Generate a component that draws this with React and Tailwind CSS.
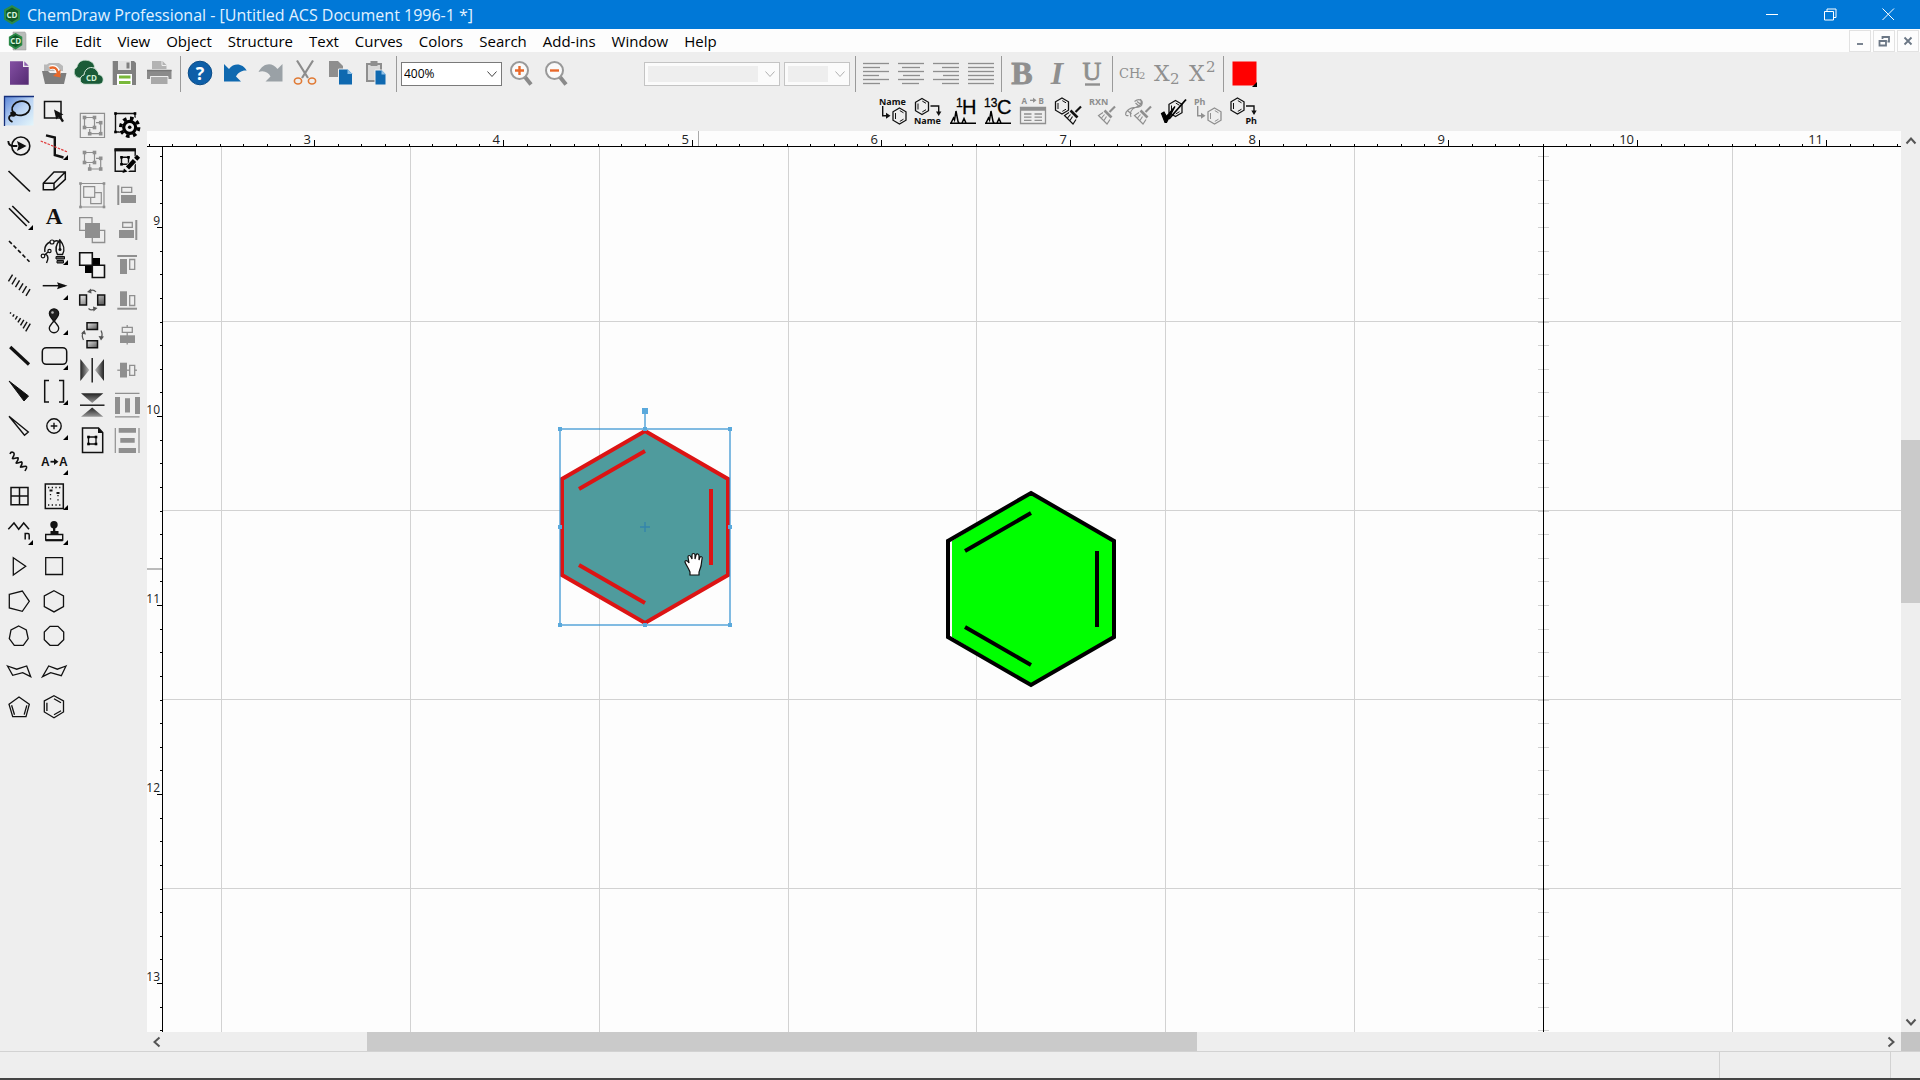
import React, { useState } from 'react';

const G = '#8f8f8f';

const menus = ['File', 'Edit', 'View', 'Object', 'Structure', 'Text', 'Curves', 'Colors', 'Search', 'Add-ins', 'Window', 'Help'];

// Small pieces shared by several icons
const Corner = () => <path d="M31 26v5h-5z" fill="#000" stroke="none" />;

const Ring = ({ x, y, color = '#111' }) => (
  <g transform={`translate(${x} ${y})`} fill="none" stroke={color} strokeWidth="1.3">
    <path d="M0-8 6.5-4.2V4.2L0 8-6.5 4.2V-4.2z" />
    <path d="M-4-3V3M.3-5.4 4-3.2M.3 5.4 4 3.2" strokeWidth="1" />
  </g>
);

const Broom = ({ x = 0, color = '#111' }) => (
  <g transform={`translate(${x} 0)`} fill="none" stroke={color}>
    <path d="M31 12.5 25.5 18" strokeWidth="2.2" />
    <path d="M20.5 16.5 27.5 23.5" strokeWidth="2.6" />
    <path d="M19 18.5 14.5 21.5 23 30 26 25.5" strokeWidth="1.2" />
    <path d="M20.5 20.5 17.5 24M22.5 22.5 20 26.5" strokeWidth="1.1" />
  </g>
);

const Label = ({ x, y, size = 9, color = '#111', children }) => (
  <text x={x} y={y} fontSize={size} fontWeight="700" fill={color} stroke="none" fontFamily="'Noto Sans', sans-serif">
    {children}
  </text>
);

const Nodes = ({ points, color = G, size = 3.6 }) =>
  points.map(([x, y]) => (
    <rect key={`${x}-${y}`} x={x - size / 2} y={y - size / 2} width={size} height={size} fill={color} stroke="none" />
  ));

const Slashes = ({ count, from, to }) =>
  Array.from({ length: count }, (_, i) => {
    const t = i / (count - 1);
    const cx = 8.5 + 17.5 * t;
    const cy = 9 + 14.5 * t;
    const half = from + (to - from) * t;
    return <path key={i} d={`M${cx - half * 0.6} ${cy + half}L${cx + half * 0.6} ${cy - half}`} strokeWidth="1.4" />;
  });

const Logo = ({ page }) => (
  <svg viewBox="0 0 20 20" className="h-5 w-5 shrink-0" aria-hidden="true">
    {page && <path d="M6 1h12l1 2v16H6z" fill="#b9bcb9" stroke="#999" strokeWidth=".5" />}
    <g transform={page ? 'translate(1 2) scale(.84)' : ''}>
      <path d="M9 0 17 4.5v10L9 19.5 1 14.5v-10z" fill="#2b8a48" />
      <path d="M9 2.5 15 6v7.5L9 17l-6-3.5V6z" fill="#0f5a28" />
    </g>
    <text x={page ? 8.7 : 9} y="12.8" textAnchor="middle" fontSize="8" fontWeight="700" fill="#d8f2dc" fontFamily="'Open Sans', sans-serif">CD</text>
  </svg>
);

const tools = [
  ['Lasso', (
    <>
      <ellipse cx="19" cy="14.3" rx="9" ry="7" transform="rotate(-12 19 14.3)" strokeWidth="1.8" />
      <path d="M8.5 18.5 13.5 21M12 18.5c1 4-5 1-5 5.5 0 2 1.5 3 3.5 4" strokeWidth="1.7" />
      <circle cx="11.2" cy="20" r="2" fill="#111" />
    </>
  )],
  ['Marquee', (
    <>
      <path d="M7.5 7.5H24V24H7.5z" strokeWidth="1.5" />
      <path d="M17 15.5 26.5 20.5 23.5 21.5 27 27 25 28.3 21.7 23 19.3 25.5z" fill="#111" stroke="none" />
    </>
  )],
  ['Structure perspective', (
    <>
      <circle cx="18.8" cy="17" r="9" strokeWidth="1.6" />
      <path d="M6.3 12c.2 4 2 5 5 5h4" strokeWidth="1.9" />
      <path d="M15 12 24.5 17 15 22 16.5 17z" fill="#111" stroke="none" />
    </>
  )],
  ['Mass fragmentation', (
    <>
      <path d="M9 6.3 17.8 8.5V26L26.5 28.5" strokeWidth="2.4" />
      <path d="M3.7 12 30.5 23" stroke="#e03a3a" strokeWidth="1.2" strokeDasharray="2.5 1.2" />
      <Corner />
    </>
  )],
  ['Solid bond', <path d="M6.5 7 28 27.5" strokeWidth="1.7" />],
  ['Eraser', <path d="M6.3 19.3 17 8H28.3V15.3L17 25.7H6.3zM6.3 19.3H17L28.3 8M17 19.3V25.7" strokeWidth="1.5" />],
  ['Multiple bonds', (
    <>
      <path d="M7 9.3 24.7 27M10.3 7 27.3 23.7" strokeWidth="1.6" />
      <Corner />
    </>
  )],
  ['Text', <text x="17" y="25" textAnchor="middle" fontSize="23" fontWeight="700" fill="#111" stroke="none" fontFamily="'Liberation Serif', serif">A</text>],
  ['Dashed bond', <path d="M7 7 27.5 27.7" strokeWidth="1.6" strokeDasharray="4 2.4" />],
  ['Pen', (
    <>
      <path d="M22.8 6C18.5 11 17.5 15 20.5 20.5H25.5C28.5 15 27 11 22.8 6zM22.9 6.5V15" strokeWidth="1.5" />
      <circle cx="23" cy="15.5" r="1.5" fill="#111" stroke="none" />
      <path d="M19 22.5H27.5V25H19zM20 26.5H26.5V29H20z" fill="#555" strokeWidth="1" />
      <path d="M13 8C9 10 7 13 8 18M17 7.5C20 6 21 6.5 22 8M7.5 21 11 18M8.5 20C12 22 11.5 25 9.5 29" strokeWidth="1.4" />
      <circle cx="15" cy="8" r="2" strokeWidth="1.2" />
      <circle cx="6" cy="22" r="1.8" strokeWidth="1.2" />
      <circle cx="12.5" cy="17" r="1.6" strokeWidth="1.2" />
      <Corner />
    </>
  )],
  ['Hashed bond', <Slashes count={6} from={3.4} to={3.4} />],
  ['Arrow', (
    <>
      <path d="M5.7 16.7H28" strokeWidth="1.5" />
      <path d="M20 13.2 30.5 16.7 20 20.2 21.5 16.7z" fill="#111" stroke="none" />
      <Corner />
    </>
  )],
  ['Hashed wedged bond', <Slashes count={7} from={0.6} to={3.8} />],
  ['Orbital', (
    <>
      <path d="M17 18C15 14 12.3 12.5 12.3 9.5A4.7 4.7 0 0 1 21.7 9.5C21.7 12.5 19 14 17 18z" fill="#222" strokeWidth="1.2" />
      <path d="M17 16.5C15 20 12.3 21.5 12.3 24A4.7 4.7 0 0 0 21.7 24C21.7 21.5 19 20 17 16.5z" strokeWidth="1.4" />
      <circle cx="15.5" cy="8.5" r="1.3" fill="#bbb" stroke="none" />
      <Corner />
    </>
  )],
  ['Bold bond', <path d="M8.2 8 27 25.5" strokeWidth="3.2" />],
  ['Rounded rectangle', (
    <>
      <rect x="5.3" y="8.7" width="24.4" height="16.6" rx="4" strokeWidth="1.5" />
      <Corner />
    </>
  )],
  ['Wedged bond', <path d="M7 7 26.5 22 22 27z" fill="#111" strokeWidth="1" />],
  ['Brackets', (
    <>
      <path d="M12 6.5H7.7V28H12M22 6.5H26.5V28H22" strokeWidth="1.5" />
      <Corner />
    </>
  )],
  ['Hollow wedged bond', <path d="M7 7.3 26.3 23 22.5 26.3z" strokeWidth="1.4" />],
  ['Chemical symbol', (
    <>
      <circle cx="17" cy="17" r="7.2" strokeWidth="1.4" />
      <path d="M13.7 17H20.3M17 13.7V20.3" strokeWidth="1.4" />
      <Corner />
    </>
  )],
  ['Wavy bond', <path d="M8 10C9 7 13 8 12 11S9 15 12 14.5 17 12.5 16 15.5 12.5 19.5 15.5 19 20.5 16.5 20 19.5 17 23.5 19.5 23 25 21 24.5 24L23 27" strokeWidth="1.6" />],
  ['Atom mapping', (
    <>
      <text x="4" y="22" fontSize="12" fontWeight="700" fill="#111" stroke="none" fontFamily="'Liberation Sans', sans-serif">A</text>
      <text x="22" y="22" fontSize="12" fontWeight="700" fill="#111" stroke="none" fontFamily="'Liberation Sans', sans-serif">A</text>
      <path d="M13.5 17.7H18" strokeWidth="1.8" />
      <path d="M17 14.5 21.5 17.7 17 21z" fill="#111" stroke="none" />
      <Corner />
    </>
  )],
  ['Table', <path d="M9 8.5H26V25.7H9zM17.5 8.5V25.7M9 17H26" strokeWidth="1.5" />],
  ['Well plate', (
    <>
      <path d="M8.3 5H26.3V29.5H8.3z" strokeWidth="1.5" />
      <path d="M11 8.5H24M11 26H24" strokeWidth="1.3" strokeDasharray="1.3 2.4" />
      <path d="M13.5 15V23M21 16V23" strokeWidth="1.3" strokeDasharray="1.3 3" />
      <path d="M12.5 11.5H15.5M19.5 14H22.5" strokeWidth="2" />
      <Corner />
    </>
  )],
  ['Acyclic chain', (
    <>
      <path d="M6.3 15.3 12 9 16.7 15.3 21.7 9 27 15.3" strokeWidth="1.5" />
      <path d="M23.2 25.5V19.5H26Q27.2 19.5 27.2 21V25.5" strokeWidth="1.5" />
      <Corner />
    </>
  )],
  ['Template stamp', (
    <>
      <circle cx="17" cy="10.7" r="3.7" fill="#111" stroke="none" />
      <path d="M16 13H18.3V17H21.5V20H13.5V17H16z" fill="#111" stroke="none" />
      <path d="M8.7 20.5H25.7V26H8.7z" strokeWidth="1.4" />
      <path d="M8.7 26.3H25.7" strokeWidth="2" />
      <Corner />
    </>
  )],
  ['Cyclopropane ring', <path d="M11.3 8.7 23.7 17.3 11.3 26z" strokeWidth="1.3" />],
  ['Cyclobutane ring', <path d="M8.7 8.7H25.5V25.5H8.7z" strokeWidth="1.3" />],
  ['Cyclopentane ring', <path d="M7.3 10.3 20.3 7 27.3 17.3 20.3 27.3 7.3 24z" strokeWidth="1.3" />],
  ['Cyclohexane ring', <path d="M17 6.7 26.5 11.9V22.5L17 27.9 7.3 22.5V11.9z" strokeWidth="1.3" />],
  ['Cycloheptane ring', <path d="M16.7 7 24.3 11 26.2 19.7 21.3 26.3H12.3L7.3 19.7 9 11z" strokeWidth="1.3" />],
  ['Cyclooctane ring', <path d="M13 7.3H21L26.7 13V20.7L21 26.3H13L7.3 20.7V13z" strokeWidth="1.3" />],
  ['Chair ring left', <path d="M5.5 12 14.7 15.2 24.7 12 28.7 22.7 20.7 18.7 10.7 21.3z" strokeWidth="1.3" />],
  ['Chair ring right', <path d="M29 12 20.3 15.2 11.7 12 5.5 22.7 13.7 18.7 24.3 21.7z" strokeWidth="1.3" />],
  ['Cyclopentadiene ring', <path d="M17 8 27.3 15.3 24 27.7H10.7L7 15.3zM9.6 16.3 12.5 25.7M24.8 16.3 22.2 25.7" strokeWidth="1.3" />],
  ['Benzene ring', <path d="M17 6.7 26.5 12V23L17 28.7 7.3 23V12zM9.9 13.7V22M17 9.7 24 13.7M17 25.7 24 21.7" strokeWidth="1.3" />],
];

const arranges = [
  ['Group', (
    <g stroke={G}>
      <path d="M5.3 5.3H29.5V29.5H5.3zM9.5 9.5H19.5V19.5H9.5zM21 14.7H25.7V25.7H14.7V21" strokeWidth="1.2" />
      <Nodes points={[[9.5, 9.5], [19.5, 9.5], [9.5, 19.5], [19.5, 19.5], [25.7, 14.7], [25.7, 25.7], [14.7, 25.7]]} />
    </g>
  )],
  ['Object settings', (
    <>
      <path d="M5.5 5.5H25V24H5.5z" strokeWidth="1.4" />
      <Nodes points={[[5.5, 5.5], [25, 5.5], [5.5, 24]]} color="#000" size={2.6} />
      <circle cx="19.7" cy="19.3" r="11" fill="#eee" stroke="none" />
      <circle cx="19.7" cy="19.3" r="9" stroke="#000" strokeWidth="3.4" strokeDasharray="3.6 3.47" />
      <circle cx="19.7" cy="19.3" r="6" fill="#eee" stroke="#000" strokeWidth="3.2" />
      <circle cx="19.7" cy="19.3" r="1.8" fill="#000" stroke="none" />
    </>
  )],
  ['Ungroup', (
    <g stroke={G}>
      <path d="M9.5 9.5H19.5V19.5H9.5zM21 15.3H25.7V26H14.7V21" strokeWidth="1.2" />
      <Nodes points={[[9.5, 9.5], [19.5, 9.5], [9.5, 19.5], [19.5, 19.5], [25.7, 15.3], [25.7, 26], [14.7, 26]]} />
    </g>
  )],
  ['Edit object', (
    <>
      <path d="M5.2 6H25.2V28.3H5.2z" strokeWidth="1.4" />
      <path d="M4.5 7H25.9" strokeWidth="2.8" />
      <path d="M11.5 14.3H18.5V21.3H11.5z" strokeWidth="1.4" />
      <Nodes points={[[11.5, 14.3], [18.5, 14.3], [11.5, 21.3]]} color="#000" size={2.6} />
      <path d="M14.5 28.5 27.5 14.5" stroke="#eee" strokeWidth="6" />
      <path d="M17.5 25 24.5 17.5M25.7 16.3 28.5 13.3" strokeWidth="4.4" stroke="#000" />
      <path d="M12.5 30 14 25.5 17.5 28.5z" fill="#000" stroke="none" />
    </>
  )],
  ['Join', (
    <g stroke={G}>
      <path d="M5.5 5.5H29V29H5.5zM8.7 8.7H19.7V19.3H8.7z" strokeWidth="1.2" />
      <path d="M20 14.7H26.3V25.7H15.7V19.7" strokeWidth="1.2" />
      <Nodes points={[[5.5, 5.5], [29, 5.5], [5.5, 29], [29, 29]]} size={2.6} />
    </g>
  )],
  ['Align left', (
    <g fill={G} stroke={G}>
      <path d="M8.3 7.3V27" strokeWidth="2" />
      <path d="M11.7 9.3H21.7V14.3H11.7z" fill="none" strokeWidth="1.3" />
      <path d="M11 17H26V25H11z" stroke="none" />
    </g>
  )],
  ['Bring to front', (
    <g stroke={G}>
      <path d="M4.7 4.7H17V17.3H4.7zM17.3 17.3H29.7V29.5H17.3z" strokeWidth="1.3" />
      <path d="M10 10H25V25H10z" fill={G} stroke="none" />
    </g>
  )],
  ['Align right', (
    <g fill={G} stroke={G}>
      <path d="M26.3 7V27" strokeWidth="2" />
      <path d="M12.7 9.5H22.3V14.3H12.7z" fill="none" strokeWidth="1.3" />
      <path d="M9 17H24V25H9z" stroke="none" />
    </g>
  )],
  ['Send to back', (
    <>
      <path d="M10 10H25V25H10z" fill="#000" stroke="none" />
      <path d="M4.7 4.7H17.3V17.3H4.7zM17.3 17.3H29.5V29.5H17.3z" fill="#f4f4f4" strokeWidth="1.6" />
    </>
  )],
  ['Align top', (
    <g fill={G} stroke={G}>
      <path d="M7.3 8H27" strokeWidth="2" />
      <path d="M10 11H17V26H10z" stroke="none" />
      <path d="M19.7 11.5H24.7V21.3H19.7z" fill="none" strokeWidth="1.3" />
    </g>
  )],
  ['Rotate horizontal', (
    <>
      <path d="M4.7 12H11.5V22H4.7zM22.7 12H29.7V22H22.7z" fill="url(#swatch)" strokeWidth="1.5" />
      <path d="M14.5 8C17 6.5 19.5 7 21 9M20 25.5C17.5 27.5 15 27 13.5 25.5" stroke="#555" strokeWidth="1.2" />
      <path d="M12 9 16 5.5 16.5 10.5zM22.5 25 18.5 28.5 18 23.5z" fill="#555" stroke="none" />
    </>
  )],
  ['Align bottom', (
    <g fill={G} stroke={G}>
      <path d="M7.3 25.7H27" strokeWidth="2" />
      <path d="M10 8.3H17V23H10z" stroke="none" />
      <path d="M19.7 12.7H24.7V22.5H19.7z" fill="none" strokeWidth="1.3" />
    </g>
  )],
  ['Rotate vertical', (
    <>
      <path d="M12 4.7H22.5V11.5H12z" fill="url(#swatch)" strokeWidth="1.5" />
      <path d="M12 22.7H22.5V29.7H12z" fill="url(#swatch)" strokeWidth="1.5" />
      <path d="M8.5 22C7 19 7 16 8.5 14M26 12.5C27.5 15 27.5 17 26.5 20" stroke="#555" strokeWidth="1.2" />
      <path d="M9.5 12 11 16.5 6 15.5zM26 22.5 23.5 18 29 18.5z" fill="#555" stroke="none" />
    </>
  )],
  ['Center vertical axis', (
    <g fill={G} stroke={G}>
      <path d="M17.2 7V26.5" strokeWidth="1.3" />
      <path d="M12.3 9.3H22.3V14.3H12.3z" fill="#eee" strokeWidth="1.3" />
      <path d="M10 17.3H25V25H10z" stroke="none" />
    </g>
  )],
  ['Flip horizontal', (
    <>
      <path d="M5.3 6 14.3 17 5.3 28z" fill="url(#shade)" stroke="none" />
      <path d="M29 6 20 17 29 28z" fill="url(#shadeBack)" stroke="none" />
      <path d="M17.2 5V29.5" strokeWidth="1.4" />
    </>
  )],
  ['Center horizontal axis', (
    <g fill={G} stroke={G}>
      <path d="M7.3 17.2H27" strokeWidth="1.3" />
      <path d="M10 9.7H17V24.5H10z" stroke="none" />
      <path d="M19.7 12.3H24.7V22.3H19.7z" fill="#eee" strokeWidth="1.3" />
    </g>
  )],
  ['Flip vertical', (
    <>
      <path d="M6 5.3H28.3L17.2 15z" fill="url(#shadeDown)" stroke="none" />
      <path d="M6 28.8H28.3L17.2 19.5z" fill="url(#shadeDown)" stroke="none" />
      <path d="M5 17.2H29.5" strokeWidth="1.4" />
    </>
  )],
  ['Distribute horizontally', (
    <g fill={G} stroke={G}>
      <path d="M5 5.3H29.5M5 28.8H29.5" strokeWidth="1.2" />
      <path d="M5 9H10V26H5zM15 10.3H20V24.5H15zM25 9H30V26H25z" stroke="none" />
    </g>
  )],
  ['Page setup', (
    <>
      <path d="M7.5 5H23.5L27.7 9.5V29.5H7.5z" strokeWidth="1.5" />
      <path d="M23 4.7V10H28z" fill="#111" stroke="none" />
      <path d="M13.5 14H21V21H13.5z" strokeWidth="1.3" />
      <Nodes points={[[13.5, 14], [21, 14], [13.5, 21], [21, 21]]} color="#000" size={2.6} />
    </>
  )],
  ['Distribute vertically', (
    <g fill={G} stroke={G}>
      <path d="M5.3 5V30M29 5V30" strokeWidth="1.2" />
      <path d="M8.7 5H26V9.7H8.7zM10.3 15H24.7V19.7H10.3zM8.7 25H26V30H8.7z" stroke="none" />
    </g>
  )],
];

const fileTools = [
  ['New', (
    <>
      <path d="M8 5.3H21V11H26.7V28.7H8z" fill="url(#purple)" stroke="none" />
      <path d="M22.3 5.3 26.7 9.7H22.3z" fill="#8d5fae" stroke="none" />
    </>
  )],
  ['Open', (
    <>
      <path d="M7 15V8.5H10L12 7H22L26 10V15z" fill="#b9b9b9" stroke="none" />
      <path d="M5 15H11L13 17H29.5L27 28H8z" fill="#7d7d7d" stroke="none" />
      <path d="M12.5 12C17 10 20.5 12 21.5 18" stroke="#fff" strokeWidth="4.5" />
      <path d="M12.5 12C17 10.5 20 12 21 17" stroke="#e8682a" strokeWidth="2.4" />
      <path d="M16 20 23.5 21.5V13.5z" fill="#e8682a" stroke="none" />
    </>
  )],
  ['Open from cloud', (
    <>
      <path d="M7 22A6 6 0 0 1 5 11C6 6 10 3.5 15 4.3 19 5 22 7 22.5 11L14 22z" fill="#1c5c38" stroke="#cfe3d5" strokeWidth=".8" />
      <path d="M13 28.3C7 28.3 6.5 20 12 19 12.5 12 20 9 24.5 14 26 15.5 26.5 17 26.5 18.5 32.5 19 33 28 27 28.3z" fill="#1a5b38" stroke="#dcebe0" strokeWidth="1" />
      <text x="19.5" y="24.5" textAnchor="middle" fontSize="8" fontWeight="700" fill="#cdeed4" stroke="none" fontFamily="'Open Sans', sans-serif">CD</text>
    </>
  )],
  ['Save', (
    <>
      <path d="M5.7 5H27L29 7V29H5.7z" fill="#808080" stroke="none" />
      <path d="M11 5H24V14H11z" fill="#e3e3e3" stroke="none" />
      <path d="M19.5 6.5H22.5V12.5H19.5z" fill="#808080" stroke="none" />
      <path d="M10 18H25V29H10z" fill="#fff" stroke="none" />
      <path d="M12 19.5H23.5V22.5H12zM12 25H23.5V28H12z" fill="#79b83a" stroke="none" />
    </>
  )],
  ['Print', (
    <>
      <path d="M10 13V5H20.5L24.5 9V13z" fill="#b3b3b3" stroke="none" />
      <path d="M20 5V9.5H24.5" stroke="#eee" strokeWidth="1" />
      <path d="M5 14H29.5V23H26V20H8.5V23H5z" fill="#8b8b8b" stroke="none" />
      <path d="M8.5 20.5H26V28.5H8.5z" fill="#a8a8a8" stroke="#eee" strokeWidth="1" />
      <path d="M5 14.5H29.5" stroke="#777" strokeWidth="1.5" />
    </>
  )],
];

const editTools = [
  ['Help', (
    <>
      <circle cx="17" cy="17" r="11.8" fill="#0e5fa8" stroke="#0a4c88" strokeWidth="1" />
      <text x="17" y="23.5" textAnchor="middle" fontSize="18" fontWeight="700" fill="#fff" stroke="none" fontFamily="'Open Sans', sans-serif">?</text>
    </>
  )],
  ['Undo', <path d="M6 8V25.5H23L18 20.5C20 16.5 24 14 28.7 14.5 25 7.5 16 6 11 13z" fill="#0f69b0" stroke="none" />],
  ['Redo', <path d="M29.5 8V25.5H12.5L17.5 20.5C15.5 16.5 11 14 5.5 16 10 7 19 5.5 24.5 13z" fill="#9aa1a6" stroke="none" />],
  ['Cut', (
    <>
      <path d="M9 4.5 20 22M25 4.5 14 22" stroke="#8c8c8c" strokeWidth="2.2" />
      <ellipse cx="10" cy="25" rx="3.6" ry="3" stroke="#e07a35" strokeWidth="1.6" />
      <ellipse cx="24" cy="25" rx="3.6" ry="3" stroke="#e07a35" strokeWidth="1.6" />
    </>
  )],
  ['Copy', (
    <>
      <path d="M6 5H15L20 10V21H6z" fill="#8e8e8e" stroke="none" />
      <path d="M15.5 13H25L29.5 17.5V29H15.5z" fill="#0f69b0" stroke="#eee" strokeWidth="1" />
      <path d="M24.5 13V18H29.5z" fill="#8fc0e6" stroke="none" />
    </>
  )],
  ['Paste', (
    <>
      <path d="M9 8H23V25H9z" stroke="#8e8e8e" strokeWidth="2" fill="#d9d9d9" />
      <path d="M12.5 5H19.5V10H12.5z" fill="#8e8e8e" stroke="none" />
      <path d="M17 14H23.5L28 18V29H17z" fill="#0f69b0" stroke="#eee" strokeWidth="1" />
      <path d="M23.5 14V18.5H28z" fill="#8fc0e6" stroke="none" />
    </>
  )],
];

const Lens = ({ plus }) => (
  <>
    <path d="M22 21 28 28.5" stroke="#8a8a8a" strokeWidth="4" />
    <circle cx="16.5" cy="14.5" r="8.5" fill="#fafafa" stroke="#999" strokeWidth="2" />
    <path d={plus ? 'M12 14.5H21M16.5 10V19' : 'M12 14.5H21'} stroke="#e8682a" strokeWidth="2.4" />
  </>
);

const zoomTools = [['Zoom in', <Lens plus />], ['Zoom out', <Lens />]];

const lineRows = (rows) => (
  <g stroke={G} strokeWidth="1.3">
    {rows.map(([x, w], i) => (
      <path key={i} d={`M${x} ${7.5 + i * 4}h${w}`} />
    ))}
  </g>
);

const alignTools = [
  ['Left', lineRows([[5, 26], [5, 17], [5, 26], [5, 16], [5, 26], [5, 17]])],
  ['Center', lineRows([[5, 26], [9, 18], [5, 26], [10, 17], [5, 26], [9, 17]])],
  ['Right', lineRows([[5, 26], [14, 17], [5, 26], [15, 16], [5, 26], [14, 17]])],
  ['Justify', lineRows([[5, 26], [5, 26], [5, 26], [5, 26], [5, 26], [5, 26]])],
];

const serif = (x, y, size, text, extra = {}) => (
  <text x={x} y={y} fontSize={size} fill={G} stroke="none" fontFamily="'DejaVu Serif', serif" {...extra}>{text}</text>
);

const styleTools = [
  ['Bold', serif(18, 28, 32, 'B', { fontWeight: 700, textAnchor: 'middle', fontFamily: "'Liberation Serif', serif", stroke: G, strokeWidth: 0.8 })],
  ['Italic', serif(18, 28, 32, 'I', { fontStyle: 'italic', fontWeight: 700, textAnchor: 'middle', fontFamily: "'Liberation Serif', serif" })],
  ['Underline', (
    <>
      {serif(18, 24, 26, 'U', { textAnchor: 'middle', fontFamily: "'Liberation Serif', serif", stroke: G, strokeWidth: 0.8 })}
      <path d="M11 28.5H26" stroke={G} strokeWidth="2.4" />
    </>
  )],
];

const scriptTools = [
  ['Formula', <>{serif(4, 22, 13, 'CH')}{serif(24, 23, 10, '2')}</>],
  ['Subscript', <>{serif(4, 25, 22, 'X')}{serif(20, 28, 15, '2')}</>],
  ['Superscript', <>{serif(4, 25, 22, 'X')}{serif(21, 16, 15, '2')}</>],
];

const spectrum = (
  <path d="M5 29.3H31M6 29 8.5 24 9.5 26 11 17 13 27.5 14 29M17 29 19 24.5 21 29" stroke="#000" strokeWidth="1.5" />
);

const thin = (x, y, size, text) => (
  <text x={x} y={y} fontSize={size} fill="#000" stroke="#000" strokeWidth=".3" fontFamily="'Liberation Sans', sans-serif">{text}</text>
);

const chemTools = [
  ['Name to structure', (
    <>
      <Label x={4} y={11}>Name</Label>
      <path d="M7.7 12V21.7H12" strokeWidth="1.4" />
      <path d="M11 18.7 15.5 21.7 11 24.7z" fill="#111" stroke="none" />
      <Ring x={24.5} y={22} />
    </>
  )],
  ['Structure to name', (
    <>
      <Ring x={12} y={12.5} />
      <path d="M20.5 12H28.7V18" strokeWidth="1.4" />
      <path d="M26 17.5 28.7 22 31.4 17.5z" fill="#111" stroke="none" />
      <Label x={4} y={30}>Name</Label>
    </>
  )],
  ['1H NMR', <>{spectrum}{thin(11, 13, 12, '1')}{thin(17, 20, 20, 'H')}</>],
  ['13C NMR', <>{spectrum}{thin(4, 13, 12, '13')}{thin(17, 20, 20, 'C')}</>],
  ['Analyze stoichiometry', (
    <>
      <Label x={6.5} y={9.5} size={8} color={G}>A</Label>
      <Label x={23.5} y={9.5} size={8} color={G}>B</Label>
      <path d="M15 6.3H19" stroke={G} strokeWidth="1.3" />
      <path d="M18 3.8 21.5 6.3 18 8.8z" fill={G} stroke="none" />
      <path d="M5.5 13.5H30.5V29.5H5.5z" stroke={G} strokeWidth="1.3" />
      <path d="M5.5 15H30.5" stroke={G} strokeWidth="3.5" />
      <path d="M9 20H16.5M19.5 20H27M9 23.2H16.5M19.5 23.2H27M9 26.4H16.5M19.5 26.4H27" stroke={G} strokeWidth="1.3" />
    </>
  )],
  ['Clean up structure', <><Ring x={12} y={12} /><Broom /></>],
  ['Clean up reaction', <><Label x={4} y={11} color={G}>RXN</Label><Broom x={-1} color={G} /></>],
  ['Clean up biopolymer', (
    <>
      <g stroke={G} strokeWidth="1.2">
        <path d="M20.5 5C23 11 19 12 15.5 13.5S9 17 11 23M14.5 7.5C19 4 24 6 21.5 11.5 19 15 13 11.5 8 16 4.5 19 5 22.5 8.5 21.5M17 7.5 21 10.5M15.5 9 19.5 12.5M8 17 11.5 20" />
      </g>
      <Broom color={G} />
    </>
  )],
  ['Check structure', (
    <>
      <Ring x={20.5} y={14.5} />
      <path d="M14 25 31 5.5" stroke="#000" strokeWidth="1.8" />
      <path d="M6.5 19.5 9 18 11.5 22.5 20 12.5 11.5 28.5H10z" fill="#000" stroke="#000" strokeWidth="1.2" />
    </>
  )],
  ['Expand label', (
    <>
      <Label x={4} y={10.5} color={G}>Ph</Label>
      <path d="M7.7 12V21.7H12" stroke={G} strokeWidth="1.4" />
      <path d="M11 18.7 15.5 21.7 11 24.7z" fill={G} stroke="none" />
      <Ring x={24.5} y={22} color={G} />
    </>
  )],
  ['Contract label', (
    <>
      <Ring x={12.5} y={12} />
      <path d="M21 12H29V17" strokeWidth="1.4" />
      <path d="M26.3 16.5 29 21 31.7 16.5z" fill="#111" stroke="none" />
      <Label x={20.5} y={30}>Ph</Label>
    </>
  )],
];

const ToolButton = ({ name, children, active, onClick }) => (
  <button
    type="button"
    aria-label={name}
    aria-pressed={active}
    onClick={onClick}
    className="h-[35px] w-[35px] shrink-0 p-0 hover:bg-white/60"
  >
    <svg viewBox="0 0 35 35" className="h-full w-full" fill="none" stroke="#111" strokeWidth="1.5" aria-hidden="true">
      {active && <rect x="2.5" y="2.5" width="29" height="29" fill="url(#pressed)" stroke="none" />}
      {active && <path d="M2.5 32V2.5H32" stroke="#16307c" strokeWidth="1.3" />}
      {children}
    </svg>
  </button>
);

const ToolSet = ({ items }) => items.map(([name, icon]) => <ToolButton key={name} name={name}>{icon}</ToolButton>);

const Separator = () => (
  <span className="flex h-9 w-1.5 shrink-0 justify-center">
    <span className="w-px bg-[#9a9a9a]" />
  </span>
);

const Chevron = ({ d, className }) => (
  <svg viewBox="0 0 12 12" className={`h-3 w-3 shrink-0 ${className}`} fill="none" stroke="currentColor" aria-hidden="true">
    <path d={d} />
  </svg>
);

const EmptySelect = ({ label, width }) => (
  <div className={`flex h-6 items-center border border-[#c4c4c4] bg-[#fbfbfb] p-[3px] ${width}`}>
    <select aria-label={label} disabled className="h-full min-w-0 flex-1 appearance-none bg-[#eee]" />
    <Chevron d="M1.5 3.5 6 8.5 10.5 3.5" className="ml-1.5 text-[#b0b0b0]" />
  </div>
);

// Ruler numbers are inches, each one divided in eighths
const INCH = 189;
const EIGHTHS = 8;

const TopRuler = () => (
  <svg className="block h-4 w-full shrink-0 bg-[#fdfdfd]" shapeRendering="crispEdges" aria-hidden="true">
    <rect x="0" y="15" width="100%" height="1" fill="#000" />
    {Array.from({ length: 76 }, (_, i) => {
      const x = Math.round(167 + ((i - 7) * INCH) / EIGHTHS);
      const major = (i - 7) % EIGHTHS === 0;
      return <rect key={i} x={x} y={major ? 9 : 13} width="1" height={major ? 6 : 2} fill="#000" />;
    })}
    {Array.from({ length: 9 }, (_, i) => (
      <text key={i} x={164 + i * INCH} y="13" textAnchor="end" fontSize="13" fill="#222" fontFamily="'Open Sans', sans-serif">{i + 3}</text>
    ))}
    <rect x="551" y="0" width="1" height="15" fill="#aaa" />
  </svg>
);

const SideRuler = () => (
  <svg className="block h-full w-4 shrink-0 bg-[#fdfdfd]" shapeRendering="crispEdges" aria-hidden="true">
    <rect x="15" y="0" width="1" height="100%" fill="#000" />
    {Array.from({ length: 41 }, (_, i) => {
      const y = Math.round(80 + ((i - 3) * INCH) / EIGHTHS);
      const major = (i - 3) % EIGHTHS === 0;
      return <rect key={i} x={major ? 10 : 13} y={y} width={major ? 5 : 2} height="1" fill="#000" />;
    })}
    {Array.from({ length: 5 }, (_, i) => (
      <text key={i} x="13" y={78 + i * INCH} textAnchor="end" fontSize="12" fill="#222" fontFamily="'Open Sans', sans-serif">{i + 9}</text>
    ))}
    <rect x="0" y="421" width="15" height="2" fill="#bbb" />
  </svg>
);

const Benzene = ({ x, y, fill, stroke, inset = 0 }) => (
  <g transform={`translate(${x} ${y})`}>
    <path d={`M0-96 83-48V48L0 96 ${-83 + inset} 48V-48z`} fill={fill} />
    <path d="M0-96 83-48V48L0 96-83 48V-48zM-66-38 0-76M66-38V38M-66 38 0 76" fill="none" stroke={stroke} strokeWidth="4" />
  </g>
);

const SelectionBox = ({ x, y }) => (
  <g transform={`translate(${x} ${y})`} stroke="#2f8fd0" strokeOpacity=".6" fill="none" strokeWidth="2">
    <rect x="-85" y="-98" width="170" height="196" />
    <path d="M0-98V-113" />
    <path d="M-5 0H5M0-5V5" stroke="#2277b5" strokeWidth="1.4" />
    <g fill="#5aa9dc" stroke="none">
      <rect x="-3" y="-119" width="6" height="6" />
      {[[-85, -98], [85, -98], [-85, 98], [85, 98], [0, -98], [0, 98], [-85, 0], [85, 0]].map(([a, b]) => (
        <rect key={`${a},${b}`} x={a - 2} y={b - 2} width="4" height="4" />
      ))}
    </g>
  </g>
);

const Canvas = () => (
  <svg className="block h-full min-w-0 flex-1 bg-[#fdfdfd]" role="img" aria-label="Drawing area">
    <g fill="#d2d2d2" shapeRendering="crispEdges">
      {Array.from({ length: 9 }, (_, i) => (
        <rect key={i} x={Math.round(58 + i * 188.85)} y="0" width="1" height="100%" />
      ))}
      {Array.from({ length: 4 }, (_, i) => (
        <rect key={i} x="0" y={174 + i * INCH} width="100%" height="1" />
      ))}
      {Array.from({ length: 38 }, (_, i) => (
        <rect key={i} x="1375" y={Math.round(80 + ((i - 3) * INCH) / EIGHTHS)} width="11" height="1" />
      ))}
      <rect x="1380" y="0" width="1" height="100%" fill="#000" />
    </g>
    <Benzene x={482} y={380} fill="#4f9b9d" stroke="#dc1414" />
    <SelectionBox x={482} y={380} />
    <Benzene x={868} y={442} fill="#00ff00" stroke="#000" inset={4} />
    {/* grab cursor */}
    <path
      d="M527 425C525 420 523 418 522 415 522 413 524 413 526 416L525 410C525 408 527 408 528 410L529 412V408C529 406 532 406 532 408V412L533 408C534 406 536 407 536 409V413L537 410C538 409 540 410 539 412L538 419 536 425V428H527z"
      fill="#fff"
      stroke="#111"
      strokeWidth="1.2"
    />
  </svg>
);

const windowControls = [
  ['Minimize', 'M0 6.5H12'],
  ['Restore', 'M.5 3.5H9.5V12H.5zM3 3.5V1H12V9.5H9.5'],
  ['Close', 'M.5 .5 12 12M12 .5 .5 12'],
];

const documentControls = [
  ['Minimize document', 'M3 9H9'],
  ['Restore document', 'M1.5 6H8V10.5H1.5zM4.5 4V2H11V6.5H9.5'],
  ['Close document', 'M2.5 2.5 9.5 9.5M9.5 2.5 2.5 9.5'],
];

const App = () => {
  const [tool, setTool] = useState('Lasso');
  const [zoom, setZoom] = useState('400%');

  return (
    <div className="flex h-screen flex-col overflow-hidden bg-[#eee] font-['Open_Sans',sans-serif] text-black">
      <svg className="absolute h-0 w-0" aria-hidden="true">
        <defs>
          <linearGradient id="pressed" x1="0" y1="0" x2="1" y2="1">
            <stop offset="0" stopColor="#5b86d8" />
            <stop offset=".5" stopColor="#b9d2f3" />
            <stop offset="1" stopColor="#e4f6fb" />
          </linearGradient>
          <linearGradient id="purple" x1="0" y1="0" x2="1" y2="1">
            <stop offset="0" stopColor="#8450a3" />
            <stop offset="1" stopColor="#542a72" />
          </linearGradient>
          <linearGradient id="swatch" x1="0" y1="0" x2="1" y2="1">
            <stop offset="0" stopColor="#e8e8e8" />
            <stop offset="1" stopColor="#555" />
          </linearGradient>
          <linearGradient id="shade">
            <stop offset="0" stopColor="#222" />
            <stop offset="1" stopColor="#bbb" />
          </linearGradient>
          <linearGradient id="shadeBack">
            <stop offset="0" stopColor="#bbb" />
            <stop offset="1" stopColor="#222" />
          </linearGradient>
          <linearGradient id="shadeDown" x1="0" y1="0" x2="0" y2="1">
            <stop offset="0" stopColor="#222" />
            <stop offset="1" stopColor="#999" />
          </linearGradient>
        </defs>
      </svg>

      <header className="flex h-[29px] shrink-0 items-center bg-[#0078d7] pl-[3px] text-[#e2f2ff]">
        <Logo />
        <h1 className="ml-1 flex-1 text-[16px] leading-6">ChemDraw Professional - [Untitled ACS Document 1996-1 *]</h1>
        {windowControls.map(([name, d]) => (
          <button key={name} type="button" aria-label={name} className="flex h-full w-[58px] items-center justify-center hover:bg-white/10">
            <svg viewBox="0 0 13 13" className="h-[13px] w-[13px]" fill="none" stroke="#fff" aria-hidden="true">
              <path d={d} />
            </svg>
          </button>
        ))}
        <span className="w-[3px]" />
      </header>

      <nav className="flex h-[23px] shrink-0 items-center bg-[#fdfdfd] pl-[7px]">
        <Logo page />
        <div className="flex flex-1 pt-0.5">
          {menus.map((item) => (
            <button key={item} type="button" className="px-2 text-[15px] leading-[21px] hover:bg-[#e5f3ff]">{item}</button>
          ))}
        </div>
        <div className="flex h-full gap-0.5 pr-px pt-px">
          {documentControls.map(([name, d]) => (
            <button key={name} type="button" aria-label={name} className="flex w-[22px] items-center justify-center border border-[#e2e2e2]">
              <svg viewBox="0 0 12 12" className="h-3 w-3" fill="none" stroke="#6b7785" strokeWidth="1.8" aria-hidden="true">
                <path d={d} />
              </svg>
            </button>
          ))}
        </div>
      </nav>

      <div className="flex h-[42px] shrink-0 items-center pl-0.5 pt-px">
        <ToolSet items={fileTools} />
        <Separator />
        <ToolSet items={editTools} />
        <Separator />
        <div className="ml-0.5 mr-px flex h-6 w-[101px] shrink-0 items-center border border-[#7a7a7a] bg-white">
          <select
            aria-label="Zoom level"
            value={zoom}
            onChange={(e) => setZoom(e.target.value)}
            className="h-full min-w-0 flex-1 appearance-none pl-0.5 text-[12px] leading-5 outline-none"
          >
            <option>100%</option>
            <option>200%</option>
            <option>400%</option>
          </select>
          <Chevron d="M1.5 3.5 6 8.5 10.5 3.5" className="mr-[3px] text-[#444]" />
        </div>
        <ToolSet items={zoomTools} />
        <div className="ml-[71px] mr-0.5 flex gap-1">
          <EmptySelect label="Font" width="w-[136px]" />
          <EmptySelect label="Font size" width="w-[66px]" />
        </div>
        <Separator />
        <ToolSet items={alignTools} />
        <Separator />
        <ToolSet items={styleTools} />
        <Separator />
        <ToolSet items={scriptTools} />
        <Separator />
        <ToolButton name="Color">
          <rect x="6.5" y="5.5" width="24" height="24" fill="#f00" stroke="none" />
          <Corner />
        </ToolButton>
      </div>

      <div className="flex min-h-0 flex-1">
        <aside className="flex w-[147px] shrink-0 items-start gap-[3px] pl-0.5">
          <div className="grid grid-cols-2">
            {tools.map(([name, icon]) => (
              <ToolButton key={name} name={name} active={tool === name} onClick={() => setTool(name)}>{icon}</ToolButton>
            ))}
          </div>
          <div className="grid grid-cols-2 pt-3.5">
            <ToolSet items={arranges} />
          </div>
        </aside>

        <main className="flex min-w-0 flex-1 flex-col">
          <div className="flex h-[37px] shrink-0 pl-[728px]">
            <ToolSet items={chemTools} />
          </div>
          <div className="flex min-h-0 flex-1">
            <div className="flex min-w-0 flex-1 flex-col">
              <TopRuler />
              <div className="flex min-h-0 flex-1">
                <SideRuler />
                <Canvas />
              </div>
            </div>
            <div className="flex w-[19px] shrink-0 flex-col items-center justify-between">
              <button type="button" aria-label="Scroll up" className="flex h-5 w-full items-center justify-center text-[#555]">
                <Chevron d="M1.5 8.5 6 3.5 10.5 8.5" className="stroke-2" />
              </button>
              <span className="flex w-full flex-1 flex-col">
                <span className="flex-[289]" />
                <span className="flex-[163] bg-[#cacaca]" />
                <span className="flex-[409]" />
              </span>
              <button type="button" aria-label="Scroll down" className="flex h-5 w-full items-center justify-center text-[#555]">
                <Chevron d="M1.5 3.5 6 8.5 10.5 3.5" className="stroke-2" />
              </button>
            </div>
          </div>
          <div className="flex h-[19px] shrink-0">
            <button type="button" aria-label="Scroll left" className="flex w-5 items-center justify-center text-[#555]">
              <Chevron d="M8.5 1.5 3.5 6 8.5 10.5" className="stroke-2" />
            </button>
            <span className="flex-[200]" />
            <span className="flex-[830] bg-[#cacaca]" />
            <span className="flex-[684]" />
            <button type="button" aria-label="Scroll right" className="flex w-5 items-center justify-center text-[#555]">
              <Chevron d="M3.5 1.5 8.5 6 3.5 10.5" className="stroke-2" />
            </button>
            <span className="w-[19px] bg-[#c4c4c4]" />
          </div>
        </main>
      </div>

      <footer className="flex h-[29px] shrink-0 justify-end border-b-2 border-t border-b-[#444] border-t-[#d2d2d2]">
        <span className="w-[171px] border-l border-[#d2d2d2]" />
        <span className="w-[30px] border-l border-[#d2d2d2]" />
      </footer>
    </div>
  );
};

export default App;
